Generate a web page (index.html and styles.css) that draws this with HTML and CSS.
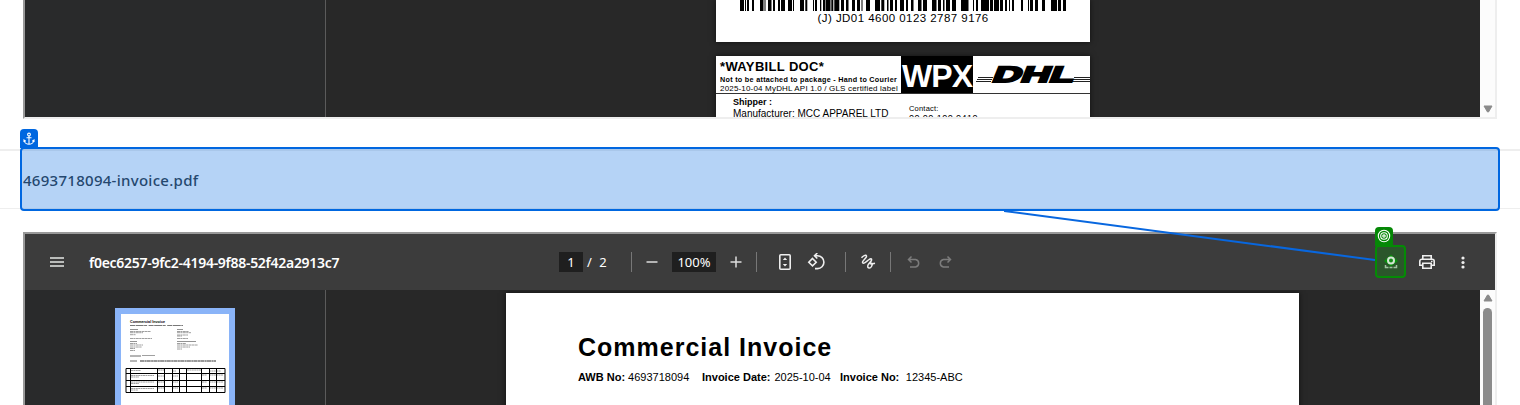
FILE: index.html
```html
<!DOCTYPE html>
<html lang="en">
<head>
<meta charset="utf-8">
<title>Shipping documents</title>
<link rel="stylesheet" href="styles.css">
</head>
<body>
<section class="frame frame-label">
  <div class="viewer">
    <div class="thumbs"></div>
    <div class="pages">
      <div class="sheet label-end">
        <svg class="barcode" width="326" height="11" viewBox="0 0 326 11"><path stroke="#000" stroke-width="11" fill="none" d="M0 5.500h4M5 5.500h1M7 5.500h2M12 5.500h2M20 5.500h3.500M24.500 5.500h1M28 5.500h3.500M33 5.500h2M38 5.500h2M41 5.500h4M48 5.500h4M53 5.500h1M60 5.500h4M65.300 5.500h2M73 5.500h1M75 5.500h2M80 5.500h1.300M83 5.500h2M85.500 5.500h5M91.300 5.500h2M94.300 5.500h5M101 5.500h3M106 5.500h2.500M112 5.500h3M117 5.500h3M121.500 5.500h1M126 5.500h4M135 5.500h5M141.300 5.500h3M147 5.500h1.500M150 5.500h3M155 5.500h2M160 5.500h4M166 5.500h2M171 5.500h2.500M178 5.500h3.500M183 5.500h4M192 5.500h4.500M198 5.500h3M203 5.500h1.500M206 5.500h4M212 5.500h4M221 5.500h7.500M233 5.500h1M236 5.500h2M241 5.500h8M250 5.500h3M254 5.500h5M260 5.500h3M265 5.500h2M269 5.500h1M272 5.500h2M281 5.500h2M288 5.500h1M290 5.500h3M295 5.500h3M302 5.500h3M311 5.500h6M318 5.500h3M323 5.500h3"/></svg>
        <div class="code">(J) JD01 4600 0123 2787 9176</div>
      </div>
      <div class="sheet waybill">
        <div class="way-head">
          <div class="way-text">
            <div class="way-title">*WAYBILL DOC*</div>
            <div class="way-note">Not to be attached to package - Hand to Courier</div>
            <div class="way-api">2025-10-04 MyDHL API 1.0 / GLS certified label</div>
          </div>
          <div class="wpx">WPX</div>
          <svg class="dhl" width="117" height="37" viewBox="0 0 117 37">
            <path d="M5 21.500H20M4 23.500H19M3 25.500H18M101 21.500H117M100 23.500H117M99 25.500H117" stroke="#222" stroke-width="1.100"/>
            <text class="dhl-name" transform="translate(18 26.300) skewX(-22)" textLength="81" lengthAdjust="spacingAndGlyphs">DHL</text>
          </svg>
        </div>
        <div class="way-body">
          <div class="shipper"><b>Shipper :</b><div>Manufacturer: MCC APPAREL LTD</div></div>
          <div class="contact">Contact:<div class="phone">00 00 100 0410</div></div>
        </div>
      </div>
    </div>
    <div class="scroll scroll-end"><svg width="10" height="8" viewBox="0 0 10 8"><path d="M1 1H9L5.500 7H4.500Z" fill="#8b8b8b" stroke="#8b8b8b" stroke-linejoin="round"/></svg></div>
  </div>
</section>

<div class="file-row"><div class="file-name">4693718094-invoice.pdf</div></div>

<section class="frame frame-invoice">
  <div class="toolbar">
    <div class="tool-left">
      <svg width="14" height="10" viewBox="0 0 14 10"><path d="M0 1H14M0 5H14M0 9H14" stroke="#e3e6e3" stroke-width="1.500"/></svg>
      <span class="doc-title">f0ec6257-9fc2-4194-9f88-52f42a2913c7</span>
    </div>
    <div class="tool-mid">
      <span class="field page-no">1</span><span class="page-total"><span>/</span><span>2</span></span>
      <i class="sep sep-a"></i>
      <svg class="minus" width="12" height="12" viewBox="0 0 12 12"><path d="M.5 6H11.500" stroke="#ddd" stroke-width="1.500"/></svg>
      <span class="field zoom">100%</span>
      <svg class="plus" width="12" height="12" viewBox="0 0 12 12"><path d="M.5 6H11.500M6 .5V11.500" stroke="#ddd" stroke-width="1.500"/></svg>
      <i class="sep sep-b"></i>
      <svg class="fit" width="14" height="18" viewBox="0 0 14 18"><rect x="1.800" y="1.800" width="10.400" height="14.400" rx="1" fill="none" stroke="#eee" stroke-width="1.600"/><path d="M7 4.500L9.200 7H4.800ZM7 13.500L9.200 11H4.800Z" fill="#eee"/></svg>
      <svg class="rotate" width="18" height="18" viewBox="0 0 18 18" fill="none" stroke="#eee" stroke-width="1.600"><path d="M5.500 5.500L9.200 9.200L5.500 12.900L1.800 9.200Z"/><path d="M7.500 2.800H10.500A6.300 6.300 0 0 1 10.500 15.600H8M10.300 0L7.500 2.800L10.300 5.500"/></svg>
      <i class="sep sep-c"></i>
      <svg class="draw" width="16" height="16" viewBox="0 0 16 16" fill="none" stroke="#eee" stroke-width="1.500"><path d="M1.500 3.800C3 2 5.800 .3 6.500 2S1.600 7 2.600 8.700S6.500 7.500 8.500 6S12 4.300 11.500 6.200S8 9.500 7.700 12S10.200 14.800 11.500 12.500S12.500 9 11 9S9 10.800 15 9.300"/></svg>
      <i class="sep sep-d"></i>
      <svg class="undo" width="14" height="14" viewBox="0 0 14 14" fill="none" stroke="#7c7c7c" stroke-width="1.500"><path d="M4.500 1.500L1.500 4.500L4.500 7.500M1.500 4.500H8.500A3.800 3.800 0 0 1 8.500 12H3"/></svg>
      <svg class="redo" width="14" height="14" viewBox="0 0 14 14" fill="none" stroke="#7c7c7c" stroke-width="1.500"><path d="M9.500 1.500L12.500 4.500L9.500 7.500M12.500 4.500H5.500A3.800 3.800 0 0 0 5.500 12H11"/></svg>
    </div>
    <div class="tool-right">
      <div class="target">
        <svg width="16" height="16" viewBox="0 0 16 16"><path d="M8 .5L15 7L8 12.500L1 7Z" fill="#0a900d"/><circle cx="8" cy="6.500" r="3" fill="#188a1a" stroke="#d5e6d5" stroke-width="2"/><path d="M2.500 11V13.500H13.500V11" fill="none" stroke="#9fc39f" stroke-width="1.500" stroke-dasharray="5.500 1 3 1 9"/></svg>
        <div class="target-badge"><svg width="14" height="14" viewBox="0 0 14 14" fill="none" stroke="#fff"><circle cx="7" cy="7" r="5.700" stroke-width="1.100"/><circle cx="7" cy="7" r="3.300" stroke-width="1.100"/><circle cx="7" cy="7" r="1.200" stroke-width="1.200"/></svg></div>
      </div>
      <svg class="print" width="16" height="14" viewBox="0 0 16 14" fill="none" stroke="#eee" stroke-width="1.600"><path d="M3.800 3.500V.8H12.200V3.500M3.800 10.200H.8V6.200A2 2 0 0 1 2.800 4.200H13.200A2 2 0 0 1 15.200 6.200V10.200H12.200M3.800 8.200H12.200V13.200H3.800Z"/><path d="M12 6.300H13.500" stroke-width="1.300"/></svg>
      <svg class="more" width="4" height="13" viewBox="0 0 4 13" fill="#eee"><circle cx="2" cy="2" r="1.600"/><circle cx="2" cy="6.500" r="1.600"/><circle cx="2" cy="11" r="1.600"/></svg>
    </div>
  </div>
  <div class="viewer">
    <div class="thumbs">
      <div class="thumb">
        <svg width="108" height="91" viewBox="0 0 108 91" font-family="Liberation Sans, sans-serif">
          <text x="9" y="9" font-size="3.700" font-weight="bold" textLength="35">Commercial Invoice</text>
          <g fill="none" stroke="#888" stroke-width=".8">
            <path d="M9 11.500H62" stroke="#555" stroke-dasharray="5 .6 8 .5 3 1.500"/>
            <path d="M9 15.500H17M56 15.500H62M9 27.500H16M56 27.500H75" stroke="#777"/>
            <path d="M9 17.500H30M9 18.700H22M9 20.700H15M9 24.500H31M9 29.500H16M9 31H22M9 33H21M9 34.500H14M9 36.500H14M56 17.500H68M56 18.700H70M56 21H67M56 22H61M56 24.500H67M56 29.500H65M56 31H77M56 33H69M56 35H61" stroke-dasharray="3 .4 2 .4"/>
            <path d="M9 42H20M9 47H16" stroke="#444"/><path d="M21 41.500H34"/>
            <path d="M19 47H95" stroke="#333" stroke-width="1.200" stroke-dasharray="4 .4 2 .3"/>
            <path d="M10 56.500H20M37 56H43M51 57H55M66 56H80M88 57H100M10 61.500H33M10 63H18M37 62H43M51 62H57M81 61H86M88 61H102M10 68H33M10 69.500H18M37 68H43M51 68H57M81 68H86M88 68H102M10 74.500H33M10 76H17M37 74H43M51 74H57M81 74H86M88 74H102" stroke-dasharray="2 .4"/>
          </g>
          <path d="M5 54.500H104V78.500H5ZM5 59.500H104M5 66.500H104M5 72.500H104M9.500 54V79M36.500 54V79M43.500 54V79M51.500 54V79M58.500 54V79M65.500 54V79M80.500 54V79M88.500 54V79M95.500 54V79" stroke="#000" fill="none"/>
        </svg>
      </div>
    </div>
    <div class="pages">
      <div class="sheet invoice">
        <h1>Commercial Invoice</h1>
        <div class="facts"><span class="awb"><b>AWB No:</b> 4693718094</span><span class="date"><b>Invoice Date:</b>2025-10-04</span><span class="number"><b>Invoice No:</b>12345-ABC</span></div>
      </div>
    </div>
    <div class="scroll scroll-start"><svg width="10" height="8" viewBox="0 0 10 8"><path d="M1 7H9L5.500 1H4.500Z" fill="#8b8b8b" stroke="#8b8b8b" stroke-linejoin="round"/></svg><div class="handle"></div></div>
  </div>
</section>

<div class="anchor-box">
  <div class="anchor-badge"><svg width="12" height="14" viewBox="0 0 12 14" fill="none" stroke="#fff" stroke-width="1.100"><circle cx="6" cy="2.500" r="1.400"/><path d="M6 4V12.500M3.500 5.700H8.500M1 10V8L2.800 9.200M11 10V8L9.200 9.200M1.200 8.500C1.500 11 4 12.300 6 12.300S10.500 11 10.800 8.500"/></svg></div>
</div>
<svg class="connector" width="376" height="54" viewBox="0 0 376 54"><path d="M0 1L371 50" stroke="#0867df" stroke-width="2"/></svg>
</body>
</html>
```

FILE: styles.css
```css
* { box-sizing: border-box; }
body { margin: 0; width: 1520px; height: 405px; overflow: hidden; background: #fff; font-family: "Liberation Sans", Arial, sans-serif; color: #000; }
svg { display: block; flex: none; }
.frame { width: 1474px; margin-left: 23px; border: 2px solid #eee; border-left-color: #999; }
.frame-label { height: 119px; border-top: 0; }
.frame-label .viewer { height: 117px; }
.frame-invoice { height: 173px; margin-top: 23px; border-top-color: #999; border-bottom: 0; }
.frame-invoice .viewer { height: 115px; }
.viewer { display: flex; background: #282828; overflow: hidden; }
.thumbs { width: 301px; border-right: 1px solid #5b5b5b; background: #292a2b; flex: none; }
.pages { width: 1154px; overflow: hidden; flex: none; }
.sheet { background: #fff; box-shadow: 0 0 6px #0009; overflow: hidden; }
.label-end { width: 374px; height: 42px; margin-left: 390px; padding-left: 24px; }
.code { width: 326px; padding-left: 77.500px; font-size: 11.500px; line-height: 15px; letter-spacing: .45px; white-space: nowrap; }
.waybill { width: 374px; height: 80px; margin: 14px 0 0 390px; }
.way-head { display: flex; height: 38px; border-bottom: 1px solid #333; white-space: nowrap; }
.way-text { width: 185px; padding: 4px 0 0 4px; }
.way-title { font-size: 13px; line-height: 14px; font-weight: bold; letter-spacing: .35px; }
.way-note { font-size: 7.200px; line-height: 11px; font-weight: bold; letter-spacing: .3px; }
.way-api { font-size: 8px; line-height: 8px; letter-spacing: .18px; }
.wpx { width: 72px; height: 37px; padding-left: 1px; background: #000; color: #fff; font-weight: bold; font-size: 32px; line-height: 41px; letter-spacing: -.9px; }
.dhl-name { font-size: 22px; font-weight: bold; stroke: #000; stroke-width: 2px; }
.way-body { display: flex; padding: 3px 0 0 17px; white-space: nowrap; }
.shipper { width: 176px; font-size: 10px; line-height: 13px; }
.shipper b { display: block; font-size: 9px; line-height: 10px; }
.contact { padding-top: 6px; font-size: 7.500px; line-height: 11px; letter-spacing: .2px; }
.phone { font-size: 9px; line-height: 8px; letter-spacing: .45px; }
.scroll { width: 15px; background: #fcfcfc; display: flex; flex-direction: column; align-items: center; }
.scroll-end { justify-content: flex-end; padding-bottom: 4px; }
.scroll-start { padding-top: 4px; }
.handle { width: 9px; height: 112px; margin-top: 6px; border-radius: 5px 5px 0 0; background: #8b8b8b; }
.file-row { margin-top: 30px; height: 60px; border-top: 2px solid #eee; border-bottom: 1px solid #eee; padding: 16px 0 0 23px; }
.file-name { font: 500 15px/26px "Noto Sans", sans-serif; color: #343a40; letter-spacing: .28px; }
.toolbar { display: flex; align-items: center; height: 56px; background: #3c3c3c; font-family: "Noto Sans", sans-serif; color: #fff; }
.tool-left { width: 534px; padding-left: 25px; display: flex; align-items: center; gap: 25px; }
.doc-title { font-size: 14px; font-weight: 600; line-height: 20px; letter-spacing: -.28px; padding-top: 2px; }
.tool-mid { display: flex; align-items: center; width: 816px; font-size: 13px; }
.field { background: #1f1f1f; height: 20px; line-height: 21px; text-align: center; }
.page-no { width: 24px; }
.page-total { display: flex; gap: 7.500px; width: 48px; padding: 0 0 0 4px; }
.sep { width: 1px; height: 20px; background: #777; }
.minus { margin-left: 14px; }
.zoom { width: 44px; margin-left: 14px; }
.plus { margin-left: 14px; }
.sep-b { margin-left: 14px; }
.fit { margin-left: 21px; }
.rotate { margin-left: 15px; }
.sep-c { margin-left: 20px; }
.draw { margin-left: 14px; }
.sep-d { margin-left: 14px; }
.undo { margin-left: 16px; }
.redo { margin-left: 17px; }
.tool-right { display: flex; align-items: center; }
.target { position: relative; width: 31px; height: 33px; margin-bottom: 1px; border: 2px solid #048b05; border-radius: 4px; background: #2b562b; display: flex; align-items: center; justify-content: center; }
.target-badge { position: absolute; left: -2px; top: -20px; width: 18px; height: 19px; padding: 2px; border-radius: 4px 4px 0 0; background: #058806; }
.print { margin-left: 13px; }
.more { margin-left: 26px; }
.thumb { width: 120px; height: 97px; margin: 18px 0 0 90px; padding: 6px 6px 0; background: #8ab4f8; }
.thumb svg { background: #fff; }
.invoice { width: 793px; height: 127px; margin: 3px 0 0 180px; padding: 39px 0 0 72px; }
h1 { margin: 0; font-size: 25px; line-height: 30px; letter-spacing: 1px; }
.facts { display: flex; padding-top: 8px; font-size: 11px; line-height: 15px; white-space: nowrap; }
.awb { width: 124px; }
.date { width: 138px; }
.date b { margin-right: 4px; }
.number b { margin-right: 6.500px; }
.anchor-box { position: absolute; left: 20px; top: 147px; width: 1480px; height: 64px; border: 2px solid #0067e0; border-radius: 4px; background: rgba(0, 103, 224, .29); }
.anchor-badge { position: absolute; left: -2px; top: -20px; width: 18px; height: 19px; padding: 3px; border-radius: 4px 4px 0 0; background: #0067e0; }
.connector { position: absolute; left: 1004px; top: 210px; }
```
